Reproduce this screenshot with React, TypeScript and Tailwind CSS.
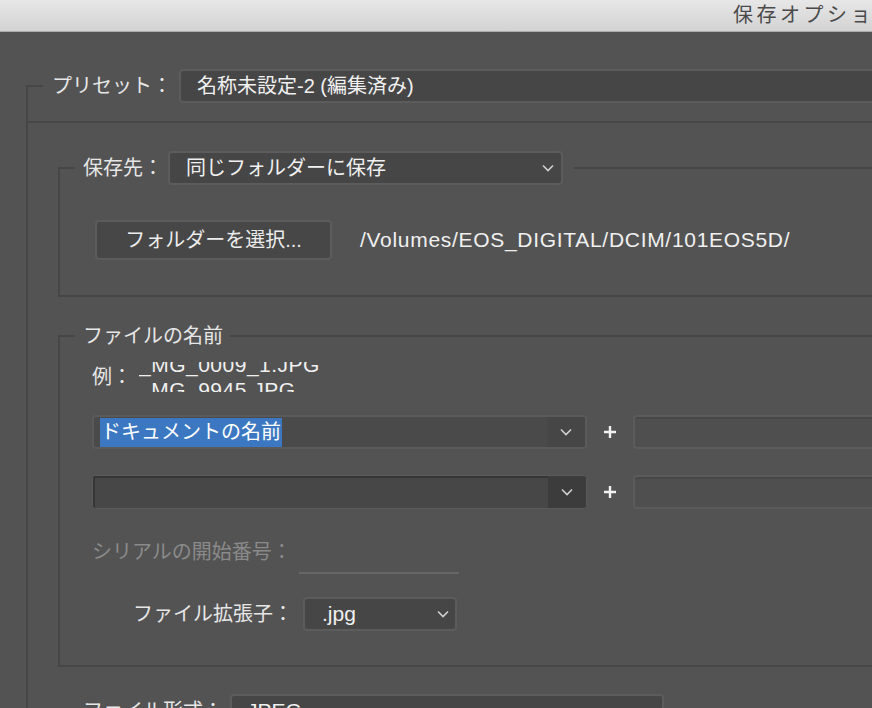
import React from 'react';

function Chevron({ color = '#d0d0d0' }: { color?: string }) {
  return (
    <svg width="12" height="8" viewBox="0 0 12 8" className="shrink-0">
      <path d="M1 1.5 6 6.5 11 1.5" fill="none" stroke={color} strokeWidth="1.6" />
    </svg>
  );
}

function Plus() {
  return (
    <svg width="14" height="14" viewBox="0 0 14 14" className="shrink-0">
      <path d="M7 1v12M1 7h12" stroke="#f2f2f2" strokeWidth="2.4" />
    </svg>
  );
}

function Select({ width, value, valueClass = '', padLeft = 'pl-[16px]', padRight = 'pr-[7px]' }: {
  width: string;
  value: string;
  valueClass?: string;
  padLeft?: string;
  padRight?: string;
}) {
  return (
    <div
      className={`${width} ${padLeft} ${padRight} h-[34px] shrink-0 rounded-[4px] border-2 border-[#5c5c5c] bg-[#464646] flex items-center justify-between`}
    >
      <span className={`whitespace-nowrap text-[#f0f0f0] ${valueClass}`}>{value}</span>
      <Chevron />
    </div>
  );
}

export default function App() {
  return (
    <div className="w-[872px] h-[708px] overflow-hidden bg-[#535353] text-[20px] leading-[28px] text-[#e6e6e6] font-['Liberation_Sans','Noto_Sans_CJK_JP',sans-serif]">
      {/* Window title bar */}
      <div className="h-[32px] border-b border-[#acacac] bg-gradient-to-b from-[#e8e7e8] to-[#d4d3d4] pl-[733px] whitespace-nowrap text-[20px] leading-[31px] tracking-[3.5px] text-[#4a4a4a]">
        保存オプション
      </div>

      {/* Preset group */}
      <fieldset className="ml-[26px] mt-[37px] w-[900px] border-2 border-[#464646]">
        <legend className="ml-[15px] pl-[9px]">
          <div className="flex items-center">
            <span className="whitespace-nowrap">プリセット：</span>
            <div className="ml-[7px] w-[760px] h-[34px] rounded-[4px] border-2 border-[#5c5c5c] bg-[#464646] pl-[16px] flex items-center whitespace-nowrap text-[#f0f0f0]">
              名称未設定-2 (編集済み)
            </div>
          </div>
        </legend>

        <div className="mt-[18px] h-[2px] bg-[#464646]" />

        {/* Destination */}
        <fieldset className="ml-[30px] mt-[28px] border-2 border-[#464646] pb-[35px]">
          <legend className="ml-[15px] pl-[8px] pr-[11px]">
            <div className="flex items-center">
              <span className="whitespace-nowrap">保存先：</span>
              <div className="ml-[5px]">
                <Select width="w-[395px]" value="同じフォルダーに保存" />
              </div>
            </div>
          </legend>
          <div className="mt-[35px] ml-[35px] flex items-center">
            <button className="w-[237px] h-[40px] rounded-[4px] border-2 border-[#5c5c5c] bg-[#474747] text-[#ececec] whitespace-nowrap">
              フォルダーを選択...
            </button>
            <span className="ml-[28px] text-[21px] tracking-[0.7px] whitespace-nowrap text-[#f0f0f0]">
              /Volumes/EOS_DIGITAL/DCIM/101EOS5D/
            </span>
          </div>
        </fieldset>

        {/* File naming */}
        <fieldset className="ml-[30px] mt-[25px] border-2 border-[#464646] pb-[34px]">
          <legend className="ml-[15px] pl-[8px] pr-[7px] whitespace-nowrap">ファイルの名前</legend>

          <div className="mt-[12px] ml-[32px] flex items-center">
            <span className="whitespace-nowrap">例：</span>
            <div className="ml-[7px] h-[30px] overflow-hidden">
              <div className="-mt-[10px] text-[21px] leading-[25px] tracking-[0.5px] text-[#f0f0f0]">
                <div>_MG_0009_1.JPG</div>
                <div>_MG_9945.JPG</div>
              </div>
            </div>
          </div>

          {/* Row 1 */}
          <div className="mt-[23px] ml-[32px] flex items-center">
            <div className="w-[495px] h-[34px] shrink-0 rounded-[4px] border-2 border-[#5a5a5a] bg-[#4a4a4a] flex overflow-hidden">
              <div className="flex-1 pl-[6px] flex items-center">
                <span className="bg-[#3b78c1] px-[1px] leading-[29px] text-white whitespace-nowrap">ドキュメントの名前</span>
              </div>
              <div className="w-[38px] bg-[#464646] flex items-center justify-center">
                <Chevron />
              </div>
            </div>
            <div className="ml-[16px]">
              <Plus />
            </div>
            <div className="ml-[16px] w-[300px] h-[34px] shrink-0 rounded-[4px] border-2 border-[#5b5b5b] bg-[#4f4f4f] shadow-[inset_0_2px_0_#474747]" />
          </div>

          {/* Row 2 */}
          <div className="mt-[26px] ml-[32px] flex items-center">
            <div className="w-[495px] h-[34px] shrink-0 rounded-[4px] border border-[#5a5a5a] bg-[#464646] flex overflow-hidden">
              <div className="flex-1 border-t-2 border-l-2 border-[#363636] bg-[#474747]" />
              <div className="w-[38px] bg-[#3c3c3c] flex items-center justify-center">
                <Chevron />
              </div>
            </div>
            <div className="ml-[16px]">
              <Plus />
            </div>
            <div className="ml-[16px] w-[300px] h-[34px] shrink-0 rounded-[4px] border-2 border-[#5b5b5b] bg-[#4f4f4f] shadow-[inset_0_2px_0_#474747]" />
          </div>

          {/* Serial start (disabled) */}
          <div className="mt-[29px] ml-[32px] flex items-start">
            <span className="whitespace-nowrap text-[#8a8a8a]">シリアルの開始番号：</span>
            <div className="ml-[7px] w-[160px] h-[36px] border-b-2 border-[#676767]" />
          </div>

          {/* Extension */}
          <div className="mt-[23px] ml-[73px] flex items-center">
            <span className="whitespace-nowrap">ファイル拡張子：</span>
            <div className="ml-[10px]">
              <Select width="w-[154px]" value=".jpg" valueClass="text-[21px]" padLeft="pl-[17px]" padRight="pr-[6px]" />
            </div>
          </div>
        </fieldset>

        {/* Format */}
        <div className="mt-[27px] ml-[55px] flex items-center">
          <span className="whitespace-nowrap">ファイル形式：</span>
          <div className="ml-[7px]">
            <Select width="w-[434px]" value="JPEG" valueClass="text-[21px]" padLeft="pl-[15px]" />
          </div>
        </div>
      </fieldset>
    </div>
  );
}
